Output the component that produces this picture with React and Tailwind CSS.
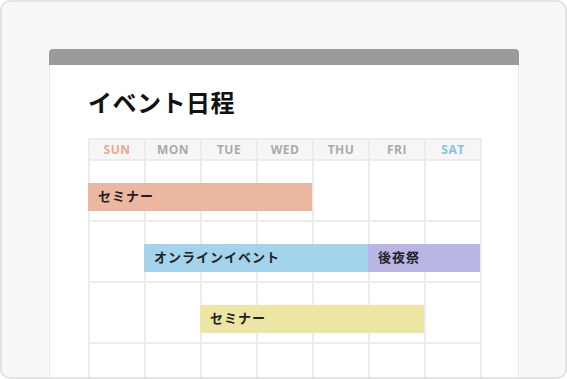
const days = [
  { label: "SUN", color: "text-[#eba88d]" },
  { label: "MON", color: "text-[#aaaaaa]" },
  { label: "TUE", color: "text-[#aaaaaa]" },
  { label: "WED", color: "text-[#aaaaaa]" },
  { label: "THU", color: "text-[#aaaaaa]" },
  { label: "FRI", color: "text-[#aaaaaa]" },
  { label: "SAT", color: "text-[#86c2e2]" },
];

// each week row: bars placed by pixel offset over the cells
const weeks = [
  [{ title: "セミナー", left: -2, width: 224, color: "bg-[#ecb7a1]" }],
  [
    { title: "オンラインイベント", left: 54, width: 224, color: "bg-[#a4d4ec]" },
    { title: "後夜祭", left: 278, width: 112, color: "bg-[#b9b5e5]" },
  ],
  [{ title: "セミナー", left: 110, width: 224, color: "bg-[#ede5a4]" }],
  [],
];

const App = () => {
  return (
    <div className="w-[567px] h-[379px] bg-white">
      <div
        className="w-full h-full border-2 border-[#e4e4e4] rounded-[10px] bg-[#f8f8f8] overflow-hidden pt-[47px] pl-[47px]"
        style={{ fontFamily: '"Noto Sans", "Noto Sans CJK JP", sans-serif' }}
      >
        <div className="w-[470px] h-[400px] bg-white border-x border-[#e8e8e8] rounded-t-[4px]">
          {/* window bar */}
          <div className="h-4 bg-[#9a9a9a] rounded-t-[4px] -mx-px"></div>

          <div className="pl-[38px]">
            <h1 className="mt-[20px] mb-[17px] text-[24px] leading-[36px] font-bold text-[#111] tracking-[0.5px]">
              イベント日程
            </h1>

            {/* calendar */}
            <div className="w-[394px] bg-[#ececec] p-[2px] flex flex-col gap-[2px]">
              <div className="grid grid-cols-7 gap-[2px]">
                {days.map((d) => (
                  <div
                    key={d.label}
                    className={`h-[19px] bg-[#f6f6f6] flex items-center justify-center text-[12px] font-bold tracking-[0.5px] ${d.color}`}
                    style={{ fontFamily: '"Open Sans", sans-serif' }}
                  >
                    {d.label}
                  </div>
                ))}
              </div>

              {weeks.map((bars, i) => (
                <div key={i} className="relative grid grid-cols-7 gap-[2px]">
                  {days.map((d) => (
                    <div key={d.label} className="h-[59px] bg-white"></div>
                  ))}
                  {bars.map((b) => (
                    <div
                      key={b.title}
                      className={`absolute top-[22px] h-[28px] flex items-center pl-[10px] text-[13px] font-bold tracking-[1px] text-[#222] ${b.color}`}
                      style={{ left: b.left, width: b.width }}
                    >
                      {b.title}
                    </div>
                  ))}
                </div>
              ))}
            </div>
          </div>
        </div>
      </div>
    </div>
  );
};

export default App;
